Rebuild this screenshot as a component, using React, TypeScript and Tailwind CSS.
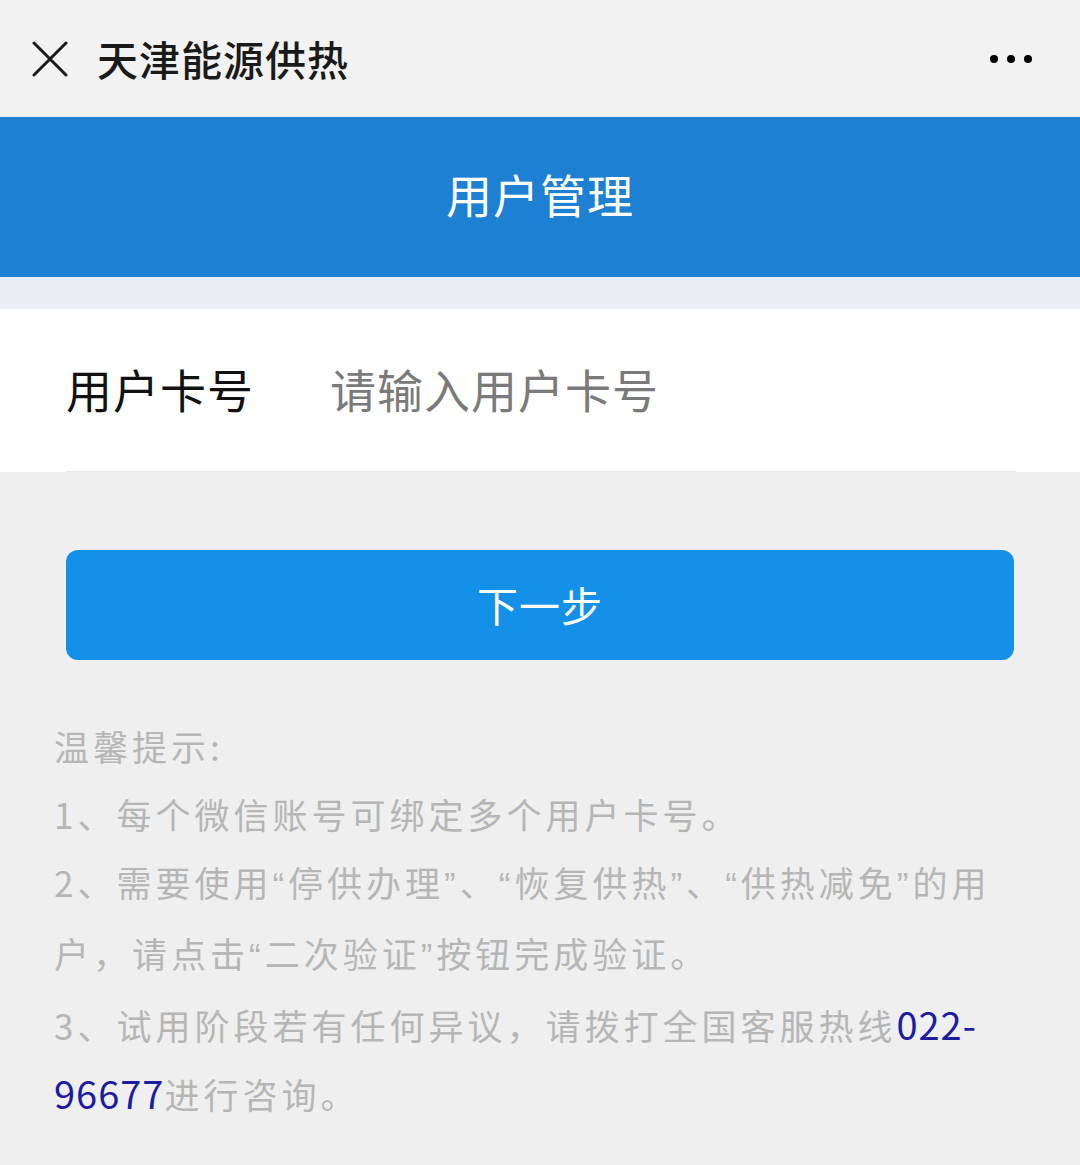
import React from 'react';

const cjk = "font-['Noto_Sans_CJK_SC','Noto_Sans',sans-serif]";

// narrow latin quotes, as the reference font draws them
function Q({ c }: { c: string }) {
    return <span className="font-['Liberation_Sans',sans-serif]">{c}</span>;
}

function App() {
    return (
        <div className={`${cjk} w-[1080px] min-h-[1165px] bg-[#efefef]`}>
            {/* WeChat top bar */}
            <div className="h-[117px] bg-[#f2f2f2] flex items-center px-[32px]">
                <svg width="36" height="36" viewBox="0 0 36 36" className="shrink-0">
                    <path d="M2 2 L34 34 M34 2 L2 34" stroke="#1a1a1a" strokeWidth="3" strokeLinecap="round" />
                </svg>
                <p className="ml-[29px] text-[41px] leading-none text-[#1a1a1a] font-medium tracking-[1px]">天津能源供热</p>
                <div className="ml-auto flex items-center gap-[9px] mr-[16px]">
                    <span className="w-[8px] h-[8px] rounded-full bg-black" />
                    <span className="w-[8px] h-[8px] rounded-full bg-black" />
                    <span className="w-[8px] h-[8px] rounded-full bg-black" />
                </div>
            </div>

            {/* Page header */}
            <div className="h-[160px] bg-[#1e80d2] flex items-center justify-center">
                <p className="text-[46px] leading-none text-white tracking-[1px] pb-[8px]">用户管理</p>
            </div>

            <div className="h-[32px] bg-[#eaeef4]" />

            {/* Input row */}
            <div className="bg-white h-[163px] flex items-center pl-[66px] pr-[64px] relative">
                <p className="text-[46px] leading-none text-[#111] w-[264px] tracking-[1px] pb-[6px]">用户卡号</p>
                <input
                    className={`${cjk} flex-1 text-[46px] leading-none tracking-[1px] bg-transparent outline-none placeholder-[#7a7a7a] pb-[6px]`}
                    placeholder="请输入用户卡号"
                />
                <div className="absolute left-[66px] right-[64px] bottom-0 h-px bg-[#e8e8e8]" />
            </div>

            {/* Button */}
            <div className="px-[66px] pt-[78px]">
                <button className="w-full h-[110px] rounded-[12px] bg-[#1590e8] text-white text-[41px] leading-none tracking-[1px] pb-[2px]">
                    下一步
                </button>
            </div>

            {/* Tips */}
            <div className="px-[54px] pt-[52px] text-[35px] leading-[68px] tracking-[4px] text-[#b6b6b6] whitespace-nowrap">
                <p>温馨提示:</p>
                <p>1、每个微信账号可绑定多个用户卡号。</p>
                <p>
                    2、需要使用<Q c="“" />停供办理<Q c="”" />、<Q c="“" />恢复供热<Q c="”" />、<Q c="“" />供热减免<Q c="”" />的用
                </p>
                <p>
                    户，请点击<Q c="“" />二次验证<Q c="”" />按钮完成验证。
                </p>
                <p>
                    3、试用阶段若有任何异议，请拨打全国客服热线<span className="text-[#1c1ca3] text-[38px] tracking-[1px]">022-</span>
                </p>
                <p>
                    <span className="text-[#1c1ca3] text-[38px] tracking-[1px]">96677</span>进行咨询。
                </p>
            </div>
        </div>
    );
}

export default App;
